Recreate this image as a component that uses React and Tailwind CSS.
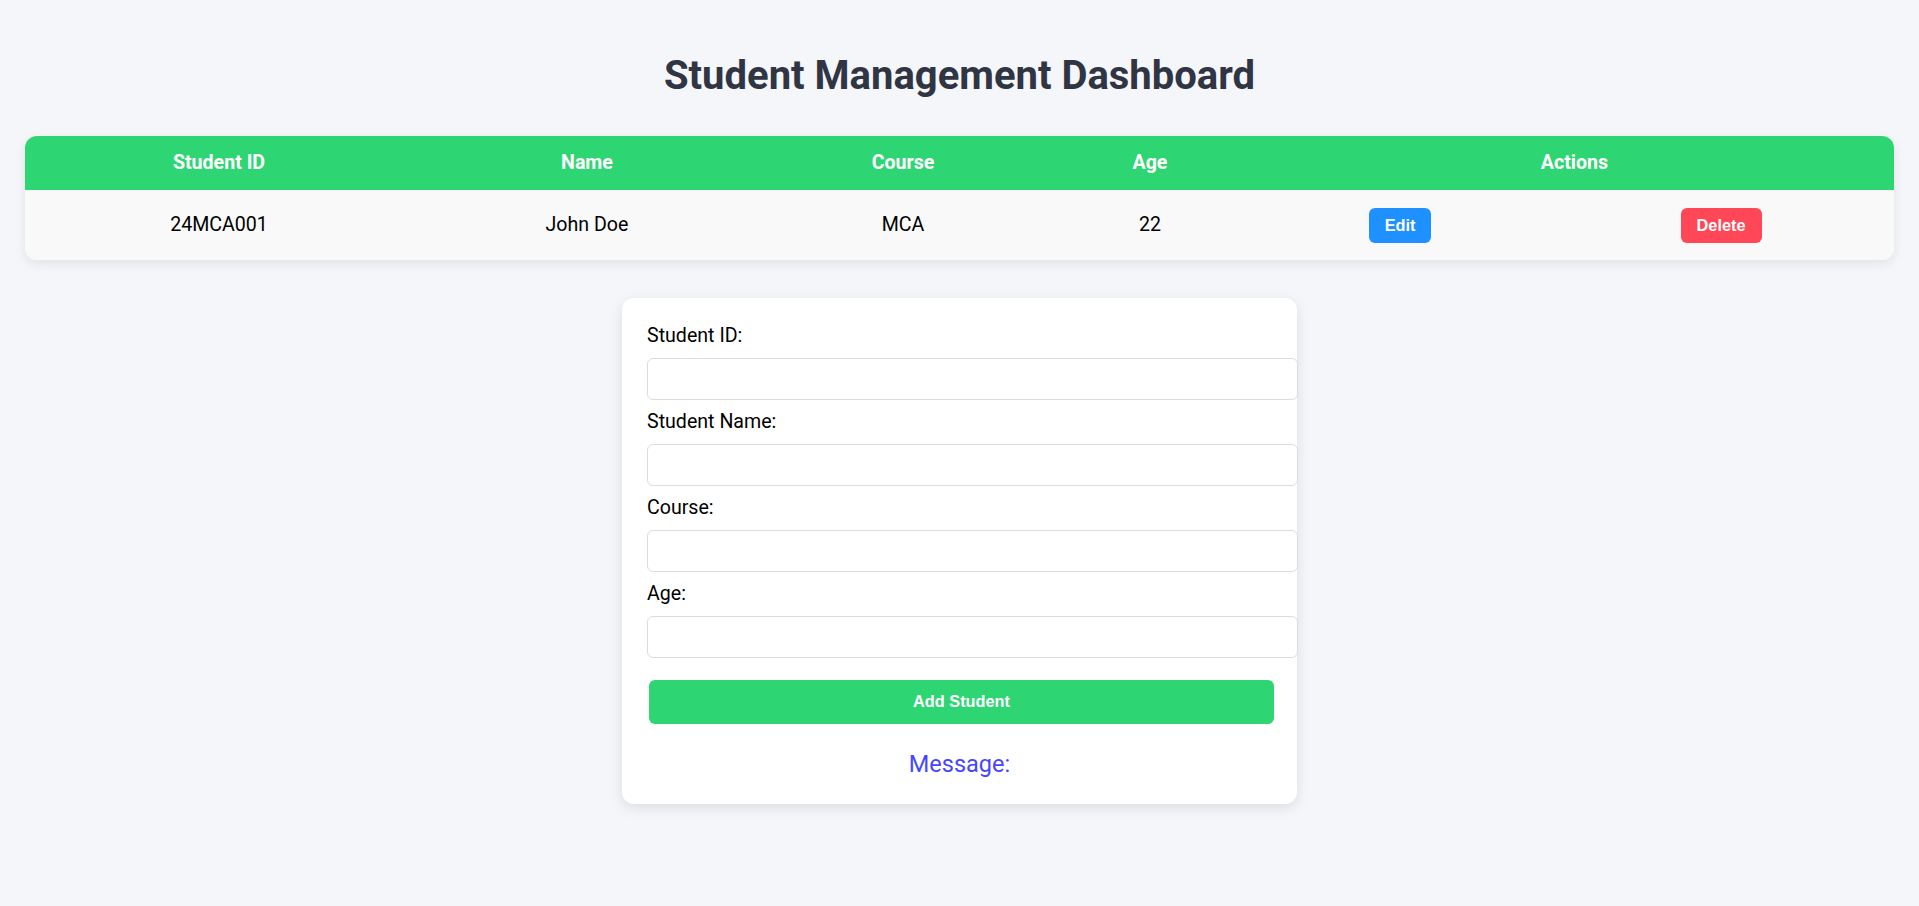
import React, { useState } from 'react';

const columns = [
    { key: 'id', label: 'Student ID', width: 'w-[388px]' },
    { key: 'name', label: 'Name', width: 'w-[348px]' },
    { key: 'course', label: 'Course', width: 'w-[284px]' },
    { key: 'age', label: 'Age', width: 'w-[210px]' },
];

const fields = [
    { name: 'id', label: 'Student ID:' },
    { name: 'name', label: 'Student Name:' },
    { name: 'course', label: 'Course:' },
    { name: 'age', label: 'Age:' },
];

export default function App() {
    const [students] = useState([
        { id: '24MCA001', name: 'John Doe', course: 'MCA', age: 22 },
    ]);
    const [form, setForm] = useState({ id: '', name: '', course: '', age: '' });

    const btnFont = { fontFamily: '"Liberation Sans", Arial, sans-serif' };

    return (
        <div
            className="min-h-screen bg-[#f5f6fa] px-[25px] pt-[52px] pb-[40px]"
            style={{ fontFamily: 'Roboto, "Noto Sans", sans-serif' }}
        >
            <h1 className="text-center text-[40px] leading-[47px] font-bold text-[#2f3542] mb-[37px]">
                Student Management Dashboard
            </h1>

            {/* Students table */}
            <div className="rounded-[12px] overflow-hidden shadow-[0_4px_12px_rgba(0,0,0,0.08)]">
                <table className="w-full table-fixed border-collapse">
                    <colgroup>
                        {columns.map((c) => (
                            <col key={c.key} className={c.width} />
                        ))}
                        <col className="w-[290px]" />
                        <col />
                    </colgroup>
                    <thead>
                        <tr className="bg-[#2ed573] h-[54px]">
                            {columns.map((c) => (
                                <th key={c.key} className="text-white text-[19.6px] font-bold text-center">
                                    {c.label}
                                </th>
                            ))}
                            <th colSpan={2} className="text-white text-[19.6px] font-bold text-center">
                                Actions
                            </th>
                        </tr>
                    </thead>
                    <tbody>
                        {students.map((s) => (
                            <tr key={s.id} className="bg-[#f9f9f9] h-[70px]">
                                <td className="text-center text-[19.6px] text-black">{s.id}</td>
                                <td className="text-center text-[19.6px] text-black">{s.name}</td>
                                <td className="text-center text-[19.6px] text-black">{s.course}</td>
                                <td className="text-center text-[19.6px] text-black">{s.age}</td>
                                <td className="text-center">
                                    <button
                                        style={btnFont}
                                        className="inline-flex items-center justify-center w-[62px] h-[35px] rounded-[6px] bg-[#1e90ff] text-white text-[16.3px] font-bold"
                                    >
                                        Edit
                                    </button>
                                </td>
                                <td className="text-center">
                                    <button
                                        style={btnFont}
                                        className="inline-flex items-center justify-center w-[81px] h-[35px] ml-[3px] rounded-[6px] bg-[#ff4757] text-white text-[16.3px] font-bold"
                                    >
                                        Delete
                                    </button>
                                </td>
                            </tr>
                        ))}
                    </tbody>
                </table>
            </div>

            {/* Add student form */}
            <div className="w-[675px] mx-auto mt-[38px] bg-white rounded-[12px] px-[25px] pt-[25.5px] pb-[25.5px] shadow-[0_4px_14px_rgba(0,0,0,0.1)]">
                <div className="flex flex-col">
                    {fields.map((f) => (
                        <div key={f.name} className="flex flex-col">
                            <label className="block text-[19.6px] leading-[24px] text-black mb-[10px]">
                                {f.label}
                            </label>
                            <input
                                value={form[f.name]}
                                onChange={(e) => setForm({ ...form, [f.name]: e.target.value })}
                                className="block w-[651px] h-[42px] mb-[10px] bg-white border border-[#dcdcdc] rounded-[6px] px-[12px] outline-none"
                            />
                        </div>
                    ))}
                </div>
                <button
                    style={btnFont}
                    className="block ml-[2px] mt-[12px] w-[625px] h-[44px] rounded-[6px] bg-[#2ed573] text-white text-[16.3px] font-bold"
                >
                    Add Student
                </button>
                <p className="mt-[27.5px] text-center text-[23.5px] leading-[27.5px] text-[#4646ff]">
                    Message:
                </p>
            </div>
        </div>
    );
}
